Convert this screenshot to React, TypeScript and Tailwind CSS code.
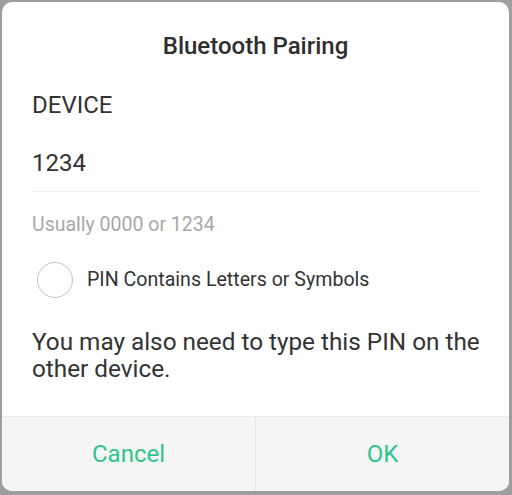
import React, { useState } from "react";

export default function App() {
  const [pin, setPin] = useState("1234");
  const [hasLetters, setHasLetters] = useState(false);

  return (
    <div
      className="w-[512px] h-[495px] bg-[#9e9e9e] pt-[2px] pl-[2px] overflow-hidden"
      style={{ fontFamily: "Roboto, 'Noto Sans', Arial, sans-serif" }}
    >
      <div className="w-[507px] h-[489px] bg-white rounded-[10px] overflow-hidden flex flex-col">
        <div className="flex-1 px-[30px] pt-[30px]">
          <h1 className="text-center text-[24px] leading-[28px] font-medium text-[#2e2e2e]">
            Bluetooth Pairing
          </h1>

          <div className="mt-[31px] text-[24px] leading-[28px] text-[#333]">
            DEVICE
          </div>

          <div className="mt-[30px] pb-[13px] border-b border-[#ececec] mr-[-1px]">
            <input
              value={pin}
              onChange={(e) => setPin(e.target.value)}
              className="w-full text-[24px] leading-[28px] h-[28px] text-[#333] outline-none bg-transparent"
            />
          </div>

          <div className="mt-[21px] text-[19.5px] leading-[24px] text-[#a8a8a8]">
            Usually 0000 or 1234
          </div>

          <button
            onClick={() => setHasLetters(!hasLetters)}
            className="mt-[25px] ml-[5px] flex items-center gap-[14px]"
          >
            <span
              className={`w-[36px] h-[36px] rounded-full border-[1.5px] ${
                hasLetters ? "border-[#30c48d] bg-[#30c48d]" : "border-[#c2c2c2]"
              }`}
            ></span>
            <span className="text-[19.6px] leading-[24px] text-[#333]">
              PIN Contains Letters or Symbols
            </span>
          </button>

          <p className="mt-[30px] mr-[-8px] text-[24.3px] leading-[27px] text-[#333]">
            You may also need to type this PIN on the other device.
          </p>
        </div>

        <div className="h-[75px] border-t border-[#e9e9e9] bg-[#f5f5f5] flex">
          <button className="flex-1 text-[24px] text-[#30c48d] border-r border-[#e6e6e6]">
            Cancel
          </button>
          <button className="flex-1 text-[24px] text-[#30c48d]">OK</button>
        </div>
      </div>
    </div>
  );
}
